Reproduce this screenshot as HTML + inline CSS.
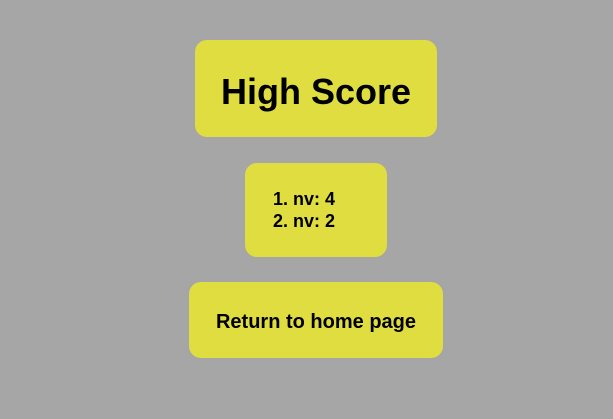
<!DOCTYPE html>
<html><head><style>
html,body{margin:0;padding:0;}
body{width:613px;height:419px;background:#a6a6a6;position:relative;overflow:hidden;font-family:"Liberation Sans",sans-serif;font-weight:bold;color:#000;}
.b{position:absolute;background:#e0dd40;border-radius:12px;}
</style></head><body>
<div class="b" style="left:195px;top:40px;width:242px;height:97px;"></div>
<div style="position:absolute;left:195px;width:242px;top:71px;text-align:center;font-size:36px;line-height:42px;">High Score</div>
<div class="b" style="left:245px;top:163px;width:142px;height:94px;"></div>
<div style="position:absolute;left:273px;top:188px;font-size:18px;line-height:22px;">1. nv: 4<br>2. nv: 2</div>
<div class="b" style="left:189px;top:282px;width:254px;height:76px;"></div>
<div style="position:absolute;left:189px;width:254px;top:310px;text-align:center;font-size:20px;line-height:24px;">Return to home page</div>
</body></html>
